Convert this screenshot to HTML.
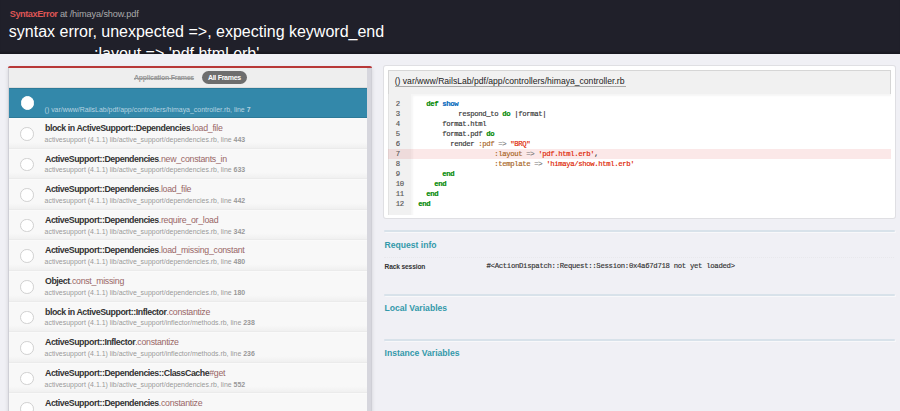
<!DOCTYPE html>
<html><head><meta charset="utf-8">
<style>
*{margin:0;padding:0;box-sizing:border-box}
html,body{width:900px;height:411px;overflow:hidden}
body{background:#f0f0f5;font-family:"Liberation Sans",sans-serif;position:relative;color:#333}
.a{position:absolute;white-space:pre;line-height:1}
#hdr{position:absolute;left:0;top:0;width:900px;height:54px;background:#20202a;overflow:hidden;box-shadow:inset 0 -3px 2px -1px rgba(0,0,0,0.25)}
.h2{font-size:9.2px;letter-spacing:-0.13px;color:#aaa}
.h2 b{color:#dd5555;font-weight:bold;letter-spacing:-0.44px}
.msg{font-size:16px;color:#fff}
#side{position:absolute;left:8px;top:68px;width:364px;height:360px;background:#d6d6dd;box-shadow:0 0 4px rgba(0,0,0,0.12),inset 0 0 0 1px rgba(0,0,0,0.03)}
#red{position:absolute;left:8px;top:66px;width:364px;height:2px;background:#b83838;border-radius:2px 2px 0 0}
#tabs{position:absolute;left:9px;top:68.2px;width:357.7px;height:19.6px;background:#eee;border-bottom:1px solid #ddd}
.tab{font-size:7px;letter-spacing:-0.28px;font-weight:bold}
#pill{position:absolute;left:201.6px;top:71.3px;width:45px;height:13.2px;border-radius:8px;background:#6e6e6e}
.row{position:absolute;left:9px;width:357.7px;background:linear-gradient(#f8f8f8 80%,#f0f0f0);border-top:1px solid rgba(255,255,255,0.7);border-bottom:1px solid rgba(0,0,0,0.05)}
.row.sel{background:#3388aa;border:none;box-shadow:inset 0 1px 0 rgba(0,0,0,0.1),inset 0 -1px 0 rgba(0,0,0,0.1)}
.ic{position:absolute;left:20.4px;width:13.6px;height:13.6px;border-radius:50%;background:#fff;border:1.2px solid #d0d0d0}
.ic.sel{border-color:#fff}
.nm{left:45px;font-size:8.8px;letter-spacing:-0.44px;font-weight:bold;color:#333}
.nm i{font-style:normal;font-weight:normal;color:#996666;font-size:8.8px;letter-spacing:-0.28px}
.lc b{font-weight:bold}
.lc{left:44.6px;font-size:6.95px;color:#999}
.lc.sel{color:#b5d3e0}
#trace{position:absolute;left:384px;top:65.8px;width:511px;height:152.2px;background:#fff;border-radius:2px;box-shadow:0 0 0 1px rgba(0,0,0,0.07)}
#title{position:absolute;left:388.4px;top:70px;width:502.7px;height:24.5px;background:#f1f1f1;border:1px solid #d6d6d6}
.loc{font-size:8.6px;color:#222}
#ul{position:absolute;left:395px;top:86px;width:231px;height:0.7px;background:#aaa}
#gut{position:absolute;left:388.4px;top:94px;width:23px;height:120.5px;background:#f1f1f1;border-left:1px solid #e2e2e2}
#code{position:absolute;left:411.4px;top:94px;width:479.7px;height:120.5px;background:#fff;box-shadow:inset 2px 2px 2px rgba(0,0,0,0.04)}
.mono{font-family:"Liberation Mono",monospace;font-size:7.3px;letter-spacing:-0.38px;-webkit-text-stroke:0.15px currentColor}
.ln{color:#555}
.cd{color:#333}
.r{color:#008800;font-weight:bold}
.fu{color:#0066bb;font-weight:bold}
.sy{color:#a8641e}
.s{color:#dd2200}
.op{color:#777}
#hl{position:absolute;left:388.4px;top:148.9px;width:502.7px;height:10px;background:rgba(220,30,30,0.1)}
.subl{position:absolute;left:384px;width:510.5px;height:2px;border-radius:1px;background:#d8e2ea;box-shadow:1px 1px 0 rgba(255,255,255,0.5)}
.h3{left:384.5px;font-size:8.6px;font-weight:bold;color:#3399aa}
</style></head><body>
<div id="hdr">
<div class="a h2" style="left:9.70px;top:10.00px;"><b>SyntaxError</b> at /himaya/show.pdf</div>
<div class="a msg" style="left:8.80px;top:24.00px;">syntax error, unexpected =&gt;, expecting keyword_end</div>
<div class="a msg" style="left:94.00px;top:46.00px;">:layout =&gt; &#x27;pdf.html.erb&#x27;,</div>
</div>
<div id="side"></div><div id="red"></div><div id="tabs"></div>
<div class="a tab" style="left:134.00px;top:74.00px;color:#999;text-decoration:line-through">Application Frames</div>
<div id="pill"></div>
<div class="a tab" style="left:207.90px;top:74.00px;color:#fff">All Frames</div>
<div class="row sel" style="top:88px;height:30px"></div>
<div class="ic sel" style="top:96.4px;left:20.8px;width:13.2px;height:13.2px"></div>
<div class="a lc sel" style="left:44.60px;top:107.00px;">() var/www/RailsLab/pdf/app/controllers/himaya_controller.rb, line <b>7</b></div>
<div class="row" style="top:118.00px;height:30.6px"></div>
<div class="ic" style="top:127.00px"></div>
<div class="a nm" style="left:45.00px;top:124.00px;">block in ActiveSupport::Dependencies<i>.load_file</i></div>
<div class="a lc" style="left:44.60px;top:137.00px;">activesupport (4.1.1) lib/active_support/dependencies.rb, line <b>443</b></div>
<div class="row" style="top:148.60px;height:30.6px"></div>
<div class="ic" style="top:157.60px"></div>
<div class="a nm" style="left:45.00px;top:155.00px;">ActiveSupport::Dependencies<i>.new_constants_in</i></div>
<div class="a lc" style="left:44.60px;top:167.00px;">activesupport (4.1.1) lib/active_support/dependencies.rb, line <b>633</b></div>
<div class="row" style="top:179.20px;height:30.6px"></div>
<div class="ic" style="top:188.20px"></div>
<div class="a nm" style="left:45.00px;top:185.00px;">ActiveSupport::Dependencies<i>.load_file</i></div>
<div class="a lc" style="left:44.60px;top:198.00px;">activesupport (4.1.1) lib/active_support/dependencies.rb, line <b>442</b></div>
<div class="row" style="top:209.80px;height:30.6px"></div>
<div class="ic" style="top:218.80px"></div>
<div class="a nm" style="left:45.00px;top:216.00px;">ActiveSupport::Dependencies<i>.require_or_load</i></div>
<div class="a lc" style="left:44.60px;top:229.00px;">activesupport (4.1.1) lib/active_support/dependencies.rb, line <b>342</b></div>
<div class="row" style="top:240.40px;height:30.6px"></div>
<div class="ic" style="top:249.40px"></div>
<div class="a nm" style="left:45.00px;top:246.00px;">ActiveSupport::Dependencies<i>.load_missing_constant</i></div>
<div class="a lc" style="left:44.60px;top:259.00px;">activesupport (4.1.1) lib/active_support/dependencies.rb, line <b>480</b></div>
<div class="row" style="top:271.00px;height:30.6px"></div>
<div class="ic" style="top:280.00px"></div>
<div class="a nm" style="left:45.00px;top:277.00px;">Object<i>.const_missing</i></div>
<div class="a lc" style="left:44.60px;top:290.00px;">activesupport (4.1.1) lib/active_support/dependencies.rb, line <b>180</b></div>
<div class="row" style="top:301.60px;height:30.6px"></div>
<div class="ic" style="top:310.60px"></div>
<div class="a nm" style="left:45.00px;top:308.00px;">block in ActiveSupport::Inflector<i>.constantize</i></div>
<div class="a lc" style="left:44.60px;top:320.00px;">activesupport (4.1.1) lib/active_support/inflector/methods.rb, line <b>238</b></div>
<div class="row" style="top:332.20px;height:30.6px"></div>
<div class="ic" style="top:341.20px"></div>
<div class="a nm" style="left:45.00px;top:338.00px;">ActiveSupport::Inflector<i>.constantize</i></div>
<div class="a lc" style="left:44.60px;top:351.00px;">activesupport (4.1.1) lib/active_support/inflector/methods.rb, line <b>236</b></div>
<div class="row" style="top:362.80px;height:30.6px"></div>
<div class="ic" style="top:371.80px"></div>
<div class="a nm" style="left:45.00px;top:369.00px;">ActiveSupport::Dependencies::ClassCache<i>#get</i></div>
<div class="a lc" style="left:44.60px;top:382.00px;">activesupport (4.1.1) lib/active_support/dependencies.rb, line <b>552</b></div>
<div class="row" style="top:393.40px;height:30.6px"></div>
<div class="ic" style="top:402.40px"></div>
<div class="a nm" style="left:45.00px;top:399.00px;">ActiveSupport::Dependencies<i>.constantize</i></div>
<div class="a lc" style="left:44.60px;top:412.00px;">activesupport (4.1.1) lib/active_support/dependencies.rb, line <b>552</b></div>
<div id="trace"></div><div id="title"></div>
<div class="a loc" style="left:394.70px;top:77.00px;">() var/www/RailsLab/pdf/app/controllers/himaya_controller.rb</div>
<div id="ul"></div><div id="gut"></div><div id="code"></div><div id="hl"></div>
<div class="a mono ln" style="left:395.80px;top:101.00px;">2</div>
<div class="a mono cd" style="left:418.30px;top:101.00px;">  <span class="r">def</span> <span class="fu">show</span></div>
<div class="a mono ln" style="left:395.80px;top:111.00px;">3</div>
<div class="a mono cd" style="left:418.30px;top:111.00px;">          respond_to <span class="r">do</span> |format|</div>
<div class="a mono ln" style="left:395.80px;top:121.00px;">4</div>
<div class="a mono cd" style="left:418.30px;top:121.00px;">      format.html</div>
<div class="a mono ln" style="left:395.80px;top:131.00px;">5</div>
<div class="a mono cd" style="left:418.30px;top:131.00px;">      format.pdf <span class="r">do</span></div>
<div class="a mono ln" style="left:395.80px;top:141.00px;">6</div>
<div class="a mono cd" style="left:418.30px;top:141.00px;">        render <span class="sy">:pdf</span> <span class="op">=&gt;</span> <span class="s">"BRQ"</span></div>
<div class="a mono ln" style="left:395.80px;top:151.00px;">7</div>
<div class="a mono cd" style="left:418.30px;top:151.00px;">                   <span class="sy">:layout</span> <span class="op">=&gt;</span> <span class="s">'pdf.html.erb'</span>,</div>
<div class="a mono ln" style="left:395.80px;top:161.00px;">8</div>
<div class="a mono cd" style="left:418.30px;top:161.00px;">                   <span class="sy">:template</span> <span class="op">=&gt;</span> <span class="s">'himaya/show.html.erb'</span></div>
<div class="a mono ln" style="left:395.80px;top:171.00px;">9</div>
<div class="a mono cd" style="left:418.30px;top:171.00px;">      <span class="r">end</span></div>
<div class="a mono ln" style="left:395.80px;top:181.00px;">10</div>
<div class="a mono cd" style="left:418.30px;top:181.00px;">    <span class="r">end</span></div>
<div class="a mono ln" style="left:395.80px;top:191.00px;">11</div>
<div class="a mono cd" style="left:418.30px;top:191.00px;">  <span class="r">end</span></div>
<div class="a mono ln" style="left:395.80px;top:201.00px;">12</div>
<div class="a mono cd" style="left:418.30px;top:201.00px;"><span class="r">end</span></div>
<div class="subl" style="top:230.1px"></div>
<div class="a h3" style="left:384.50px;top:241.00px;">Request info</div>
<div style="position:absolute;left:384px;top:257px;width:510px;border-top:1px dotted #e8e8ec"></div>
<div class="a " style="left:384.50px;top:264.00px;letter-spacing:-0.12px;font-size:6.6px;font-weight:bold;color:#333">Rack session</div>
<div class="a mono" style="left:486.50px;top:263.00px;color:#333;letter-spacing:-0.31px">#&lt;ActionDispatch::Request::Session:0x4a67d718 not yet loaded&gt;</div>
<div class="subl" style="top:294.2px"></div>
<div class="a h3" style="left:384.50px;top:304.00px;">Local Variables</div>
<div class="subl" style="top:338.7px"></div>
<div class="a h3" style="left:384.50px;top:349.00px;">Instance Variables</div>
</body></html>
